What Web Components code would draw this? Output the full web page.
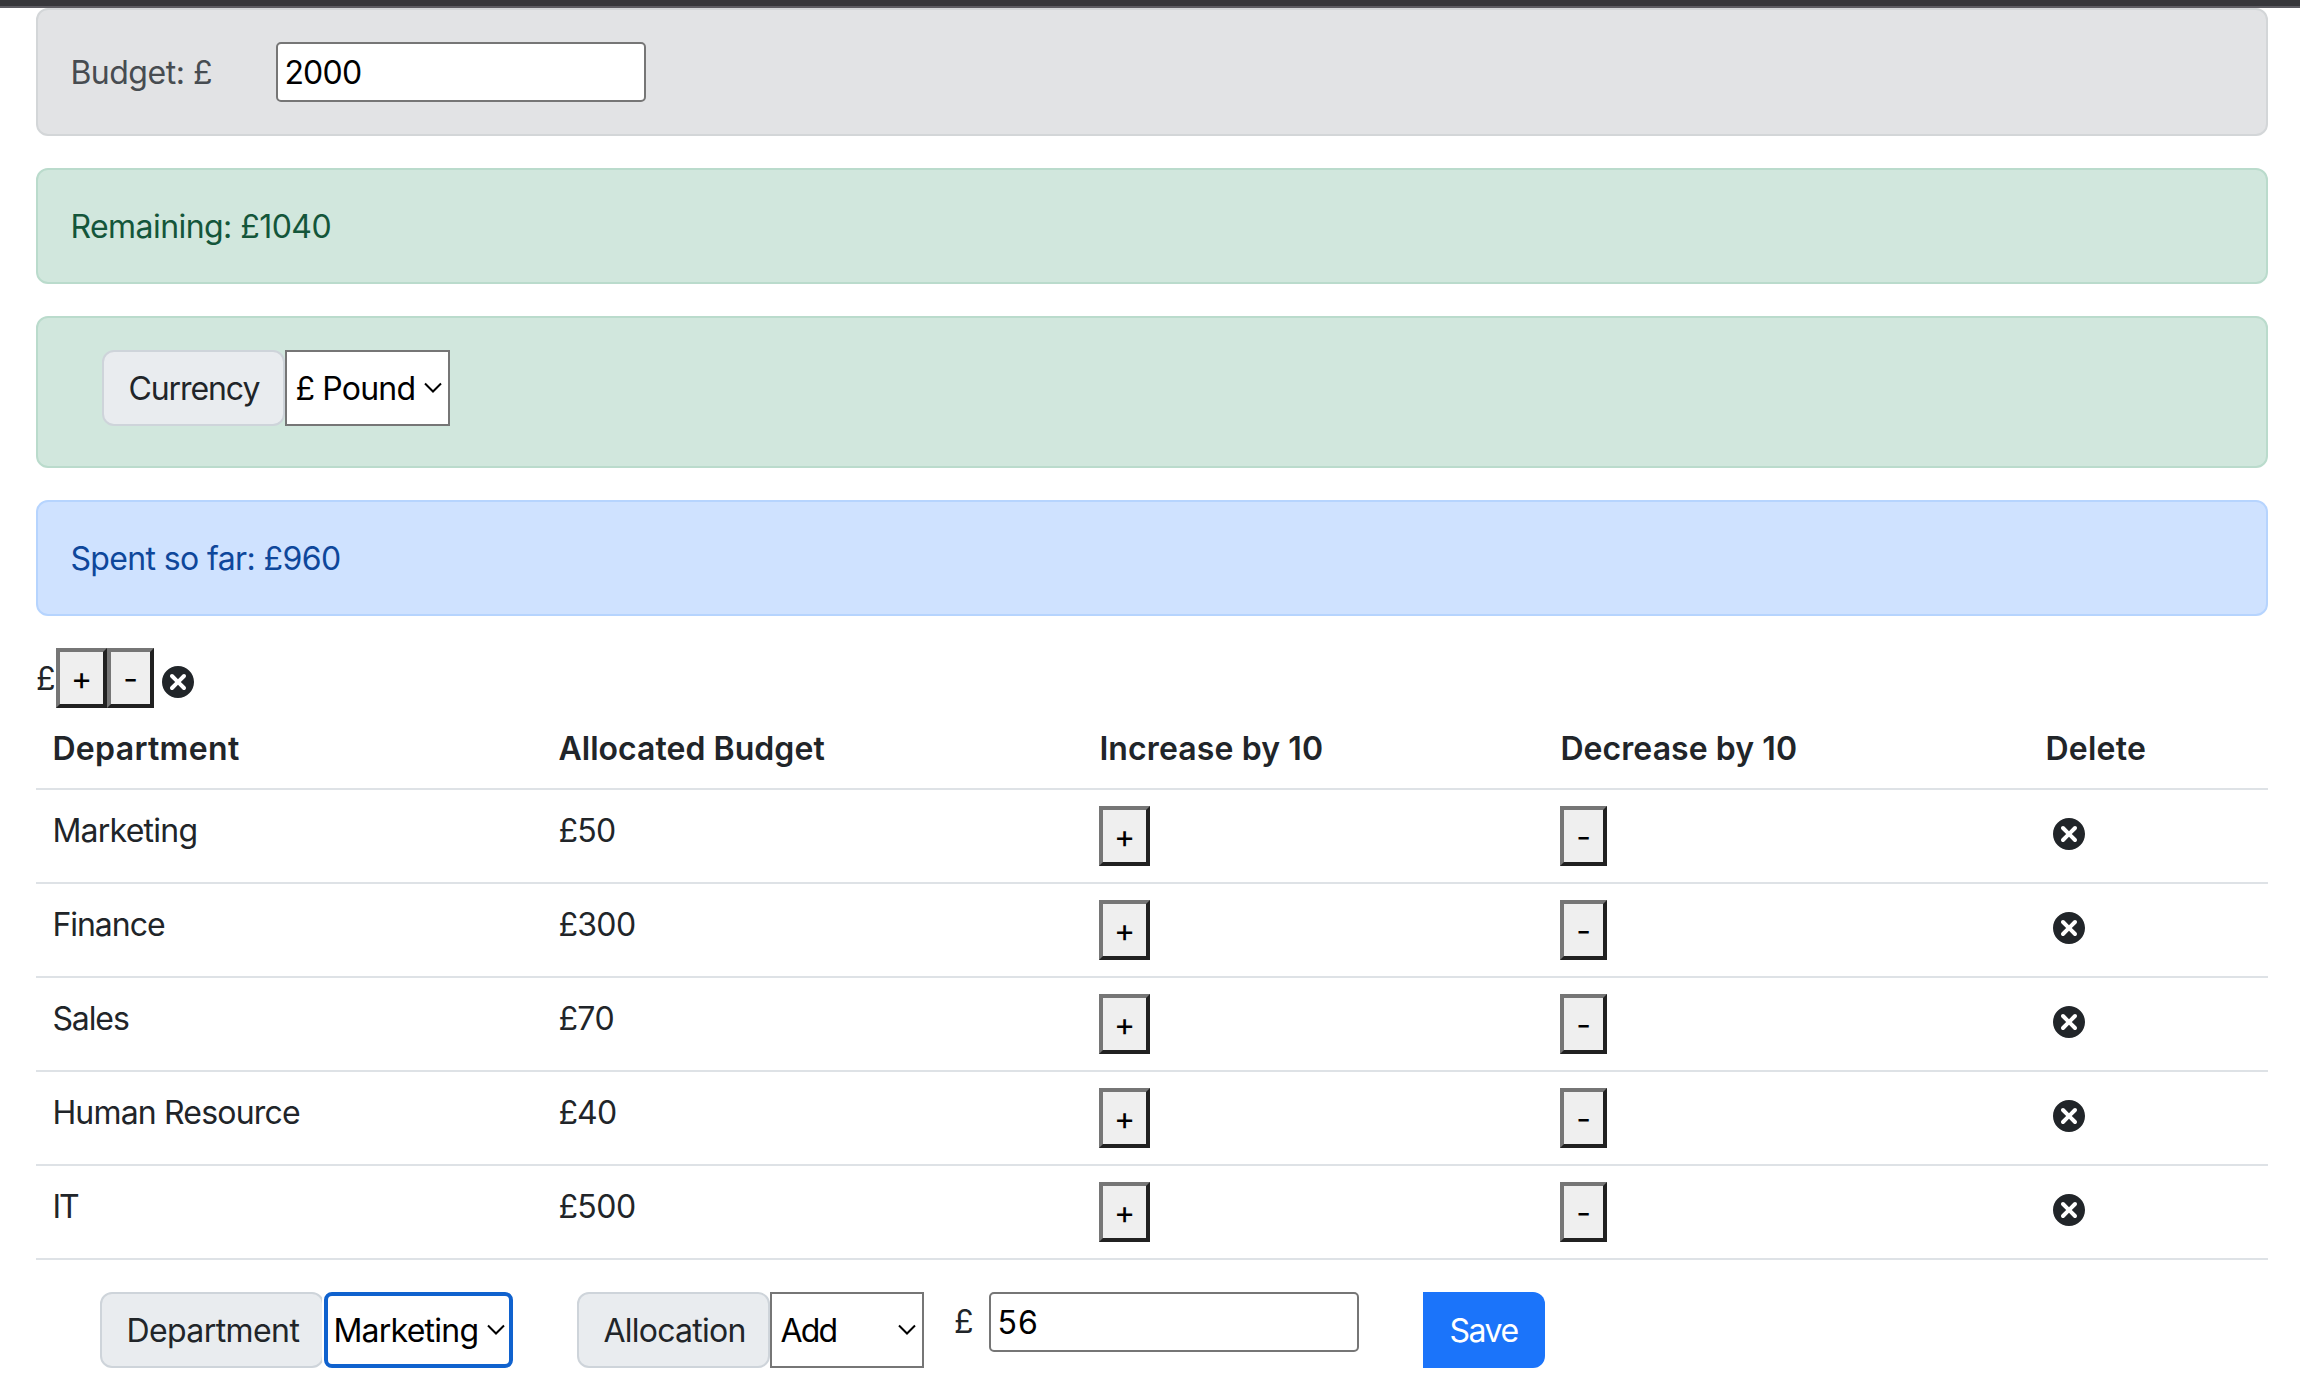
<!DOCTYPE html>
<html lang="en">
<head>
<meta charset="utf-8">
<title>Budget allocation</title>
<style>
body { margin: 0; background: #fff; color: #212529; font: 32px/48px Inter, "Liberation Sans", sans-serif; }
</style>
</head>
<body>
<budget-app></budget-app>
<script>
const ruler = document.createElement('canvas').getContext('2d');

function define(name, html, setup) {
  const template = document.createElement('template');
  template.innerHTML = html;
  customElements.define(name, class extends HTMLElement {
    connectedCallback() {
      if (this.shadowRoot) return;
      this.attachShadow({ mode: 'open' }).append(template.content.cloneNode(true));
      if (setup) setup(this);
    }
  });
}

// Text tracked so that its visible ink spans the given width.
define('fit-text', `<style>
  :host { display: inline-block; white-space: pre; padding-top: 1px; margin-bottom: -1px; margin-left: 0.4px; }
</style><slot></slot>`, host => {
  const text = host.textContent;
  const cs = getComputedStyle(host);
  ruler.font = cs.fontWeight + ' ' + cs.fontSize + ' Inter, "Liberation Sans", sans-serif';
  const m = ruler.measureText(text);
  const ink = m.actualBoundingBoxRight + m.actualBoundingBoxLeft;
  const n = text.length - 1;
  if (n > 0) host.style.letterSpacing = ((+host.getAttribute('w') - ink) / n).toFixed(3) + 'px';
});

define('window-edge', `<style>
  :host { display: block; height: 6px; background: #37373b; border-bottom: 2px solid #5e5d63; }
</style>`);

define('alert-box', `<style>
  :host { display: flex; align-items: flex-start; box-sizing: border-box; padding: 32px; border: 2px solid;
    border-radius: 12px; margin-bottom: 32px; height: 116px; }
  :host([kind=secondary]) { background: #e2e3e5; border-color: #d3d6d8; color: #474c51; height: 128px; align-items: center; }
  :host([kind=success]) { background: #d1e7dd; border-color: #badbcc; color: #14563a; }
  :host([kind=primary]) { background: #cfe2ff; border-color: #b6d4fe; color: #0e479b; }
  :host([tall]) { height: 152px; padding-left: 64px; }
</style><slot></slot>`);

define('text-field', `<style>
  :host { display: flex; box-sizing: border-box; align-items: center; width: 370px; height: 60px; padding-left: 6px;
    background: #fff; color: #000; border: 2px solid #767676; border-radius: 5px; }
</style><slot></slot>`);

define('group-label', `<style>
  :host { display: flex; box-sizing: border-box; align-items: center; height: 76px; padding-left: 24px;
    background: #e9ecef; color: #212529; border: 2px solid #ced4da; border-radius: 12px; }
</style><slot></slot>`);

define('select-box', `<style>
  :host { display: flex; box-sizing: border-box; align-items: center; justify-content: space-between; height: 76px;
    padding: 0 6px 0 8px; background: #fff; color: #000; border: 2px solid #767676; }
  :host([focused]) { border: 4px solid #1062ce; border-radius: 8px; padding: 0 4px 0 5px; box-shadow: -2px 0 0 #fff; }
  svg { display: block; width: 18px; height: 12px; flex: none; }
</style><slot></slot><svg viewBox="0 0 18 12" fill="none" stroke="currentColor" stroke-width="2"><path d="M1 1.5l8 8 8-8"/></svg>`);

define('step-button', `<style>
  :host { display: flex; box-sizing: border-box; align-items: center; justify-content: center; width: 51px; height: 60px;
    background: #efefef; color: #000; border: 4px solid; border-color: #767676 #212121 #212121 #767676; }
  :host([minus]) { width: 47px; }
  span { display: block; padding-top: 2px; }
</style><span><slot></slot></span>`);

define('delete-icon', `<style>
  :host { display: block; width: 48px; height: 48px; color: #212529; }
  svg { display: block; }
</style><svg width="48" height="48" viewBox="0 0 24 24" fill="currentColor"><path d="M12 4c-4.419 0-8 3.582-8 8s3.581 8 8 8 8-3.582 8-8-3.581-8-8-8zm3.707 10.293c.391.391.391 1.023 0 1.414-.195.195-.451.293-.707.293s-.512-.098-.707-.293l-2.293-2.293-2.293 2.293c-.195.195-.451.293-.707.293s-.512-.098-.707-.293c-.391-.391-.391-1.023 0-1.414l2.293-2.293-2.293-2.293c-.391-.391-.391-1.023 0-1.414s1.023-.391 1.414 0l2.293 2.293 2.293-2.293c.391-.391 1.023-.391 1.414 0s.391 1.023 0 1.414l-2.293 2.293 2.293 2.293z"/></svg>`);

define('save-button', `<style>
  :host { display: flex; box-sizing: border-box; align-items: center; width: 122px; height: 76px; padding-left: 26px;
    background: #1b74fa; color: #fff; border-radius: 0 12px 12px 0; }
</style><slot></slot>`);

define('table-row', `<style>
  :host { display: grid; grid-template-columns: 506px 541px 461px 485px 1fr; box-sizing: border-box; align-items: start;
    height: 94px; padding: 16px 0 0 16px; border-bottom: 2px solid #dee2e6; }
  :host([head]) { height: 82px; font-weight: 620; }
  ::slotted(delete-icon) { margin-top: 4px; }
</style><slot></slot>`);

const rows = [
  ['Marketing', 142, '£50', 55.5], ['Finance', 110.5, '£300', 75.5], ['Sales', 75.5, '£70', 54],
  ['Human Resource', 245.5, '£40', 56.5], ['IT', 24.5, '£500', 75.5]
].map(([name, nw, sum, sw]) => `<table-row>
  <fit-text w="${nw}">${name}</fit-text><fit-text w="${sw}">${sum}</fit-text>
  <step-button>+</step-button><step-button minus>-</step-button><delete-icon></delete-icon>
</table-row>`).join('');

define('budget-app', `<style>
  :host { display: block; }
  main { padding: 0 32px 0 36px; }
  .budget { width: 206px; }
  .template { display: flex; height: 60px; align-items: center; }
  .template span { width: 20px; padding-top: 2px; }
  .template delete-icon { margin-top: 8px; }
  form { display: flex; align-items: flex-start; padding: 32px 0 0 64px; }
  .sign { width: 35px; line-height: 60px; margin-left: 30px; }
</style>
<window-edge></window-edge>
<main>
  <alert-box kind="secondary"><div class="budget"><fit-text w="138.5">Budget: £</fit-text></div><text-field><fit-text w="74.5">2000</fit-text></text-field></alert-box>
  <alert-box kind="success"><fit-text w="258">Remaining: £1040</fit-text></alert-box>
  <alert-box kind="success" tall><group-label style="width:183px"><fit-text w="131">Currency</fit-text></group-label><select-box style="width:165px"><fit-text w="118">£ Pound</fit-text></select-box></alert-box>
  <alert-box kind="primary"><fit-text w="268.5">Spent so far: £960</fit-text></alert-box>
  <div class="template"><span>£</span><step-button>+</step-button><step-button minus>-</step-button><delete-icon></delete-icon></div>
  <table-row head><fit-text w="184.5">Department</fit-text><fit-text w="266">Allocated Budget</fit-text><fit-text w="220.5">Increase by 10</fit-text><fit-text w="233.5">Decrease by 10</fit-text><fit-text w="97.5">Delete</fit-text></table-row>
  ${rows}
  <form>
    <group-label style="width:224px"><fit-text w="171">Department</fit-text></group-label><select-box focused style="width:189px"><fit-text w="142">Marketing</fit-text></select-box>
    <group-label style="width:193px;margin-left:64px"><fit-text w="141">Allocation</fit-text></group-label><select-box style="width:154px"><fit-text w="56">Add</fit-text></select-box>
    <div class="sign">£</div><text-field><fit-text w="36.5">56</fit-text></text-field>
    <save-button style="margin-left:64px"><fit-text w="68">Save</fit-text></save-button>
  </form>
</main>`);
</script>
</body>
</html>
